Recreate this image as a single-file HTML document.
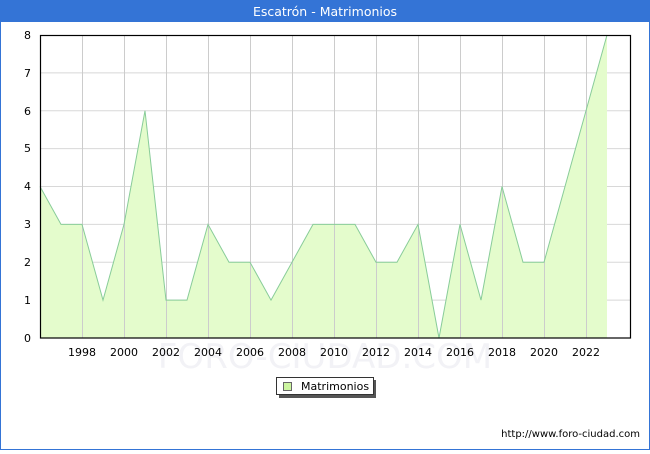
<!DOCTYPE html>
<html><head><meta charset="utf-8"><style>
body{margin:0;width:650px;height:450px;overflow:hidden;font-family:"DejaVu Sans","Liberation Sans",sans-serif;}
</style></head><body>
<svg width="650" height="450" xmlns="http://www.w3.org/2000/svg" font-family="DejaVu Sans, Liberation Sans, sans-serif">
<rect x="0" y="0" width="650" height="450" fill="#fff"/>
<rect x="0.5" y="0.5" width="649" height="449" fill="none" stroke="#3474d6"/>
<rect x="0" y="0" width="650" height="22" fill="#3474d6"/>
<text x="325" y="16" fill="#fff" font-size="12.5" text-anchor="middle">Escatrón - Matrimonios</text>
<text x="325" y="368" fill="#f2f2f6" font-size="34" text-anchor="middle">FORO-CIUDAD.COM</text>
<g stroke="#d8d8d8" stroke-width="1">
<line x1="40" x2="630" y1="300.1" y2="300.1"/><line x1="40" x2="630" y1="262.25" y2="262.25"/><line x1="40" x2="630" y1="224.4" y2="224.4"/><line x1="40" x2="630" y1="186.5" y2="186.5"/><line x1="40" x2="630" y1="148.6" y2="148.6"/><line x1="40" x2="630" y1="110.75" y2="110.75"/><line x1="40" x2="630" y1="72.9" y2="72.9"/>
</g>
<polygon fill="#e4fccc" points="40,338 40,186.5 61,224.4 82,224.4 103,300.1 124,224.4 145,110.75 166,300.1 187,300.1 208,224.4 229,262.25 250,262.25 271,300.1 292,262.25 313,224.4 334,224.4 355,224.4 376,262.25 397,262.25 418,224.4 439,338 460,224.4 481,300.1 502,186.5 523,262.25 544,262.25 565,186.5 586,110.75 607,35 607,338"/>
<g stroke="#cccccc" stroke-width="1">
<line x1="82.5" x2="82.5" y1="35" y2="338"/><line x1="124.5" x2="124.5" y1="35" y2="338"/><line x1="166.5" x2="166.5" y1="35" y2="338"/><line x1="208.5" x2="208.5" y1="35" y2="338"/><line x1="250.5" x2="250.5" y1="35" y2="338"/><line x1="292.5" x2="292.5" y1="35" y2="338"/><line x1="334.5" x2="334.5" y1="35" y2="338"/><line x1="376.5" x2="376.5" y1="35" y2="338"/><line x1="418.5" x2="418.5" y1="35" y2="338"/><line x1="460.5" x2="460.5" y1="35" y2="338"/><line x1="502.5" x2="502.5" y1="35" y2="338"/><line x1="544.5" x2="544.5" y1="35" y2="338"/><line x1="586.5" x2="586.5" y1="35" y2="338"/>
</g>
<polyline fill="none" stroke="#88cc99" stroke-width="1" points="40,186.5 61,224.4 82,224.4 103,300.1 124,224.4 145,110.75 166,300.1 187,300.1 208,224.4 229,262.25 250,262.25 271,300.1 292,262.25 313,224.4 334,224.4 355,224.4 376,262.25 397,262.25 418,224.4 439,338 460,224.4 481,300.1 502,186.5 523,262.25 544,262.25 565,186.5 586,110.75 607,35"/>
<rect x="40.5" y="35.5" width="590" height="302.5" fill="none" stroke="#000" stroke-width="1.2"/>
<g font-size="11" fill="#000" text-anchor="end">
<text x="31" y="342">0</text><text x="31" y="304">1</text><text x="31" y="266">2</text><text x="31" y="228">3</text><text x="31" y="190">4</text><text x="31" y="152">5</text><text x="31" y="115">6</text><text x="31" y="77">7</text><text x="31" y="39">8</text>
</g>
<g font-size="11" fill="#000" text-anchor="middle">
<text x="82" y="356">1998</text><text x="124" y="356">2000</text><text x="166" y="356">2002</text><text x="208" y="356">2004</text><text x="250" y="356">2006</text><text x="292" y="356">2008</text><text x="334" y="356">2010</text><text x="376" y="356">2012</text><text x="418" y="356">2014</text><text x="460" y="356">2016</text><text x="502" y="356">2018</text><text x="544" y="356">2020</text><text x="586" y="356">2022</text>
</g>
<rect x="279" y="380" width="97" height="18" fill="#555"/>
<rect x="276.5" y="377.5" width="97" height="17" fill="#fff" stroke="#333"/>
<rect x="283.5" y="382.5" width="8" height="8" fill="#ccf5a0" stroke="#666"/>
<text x="301" y="390" font-size="11" fill="#000">Matrimonios</text>
<text x="640" y="437" font-size="10" fill="#000" text-anchor="end">http://www.foro-ciudad.com</text>
</svg>
</body></html>
